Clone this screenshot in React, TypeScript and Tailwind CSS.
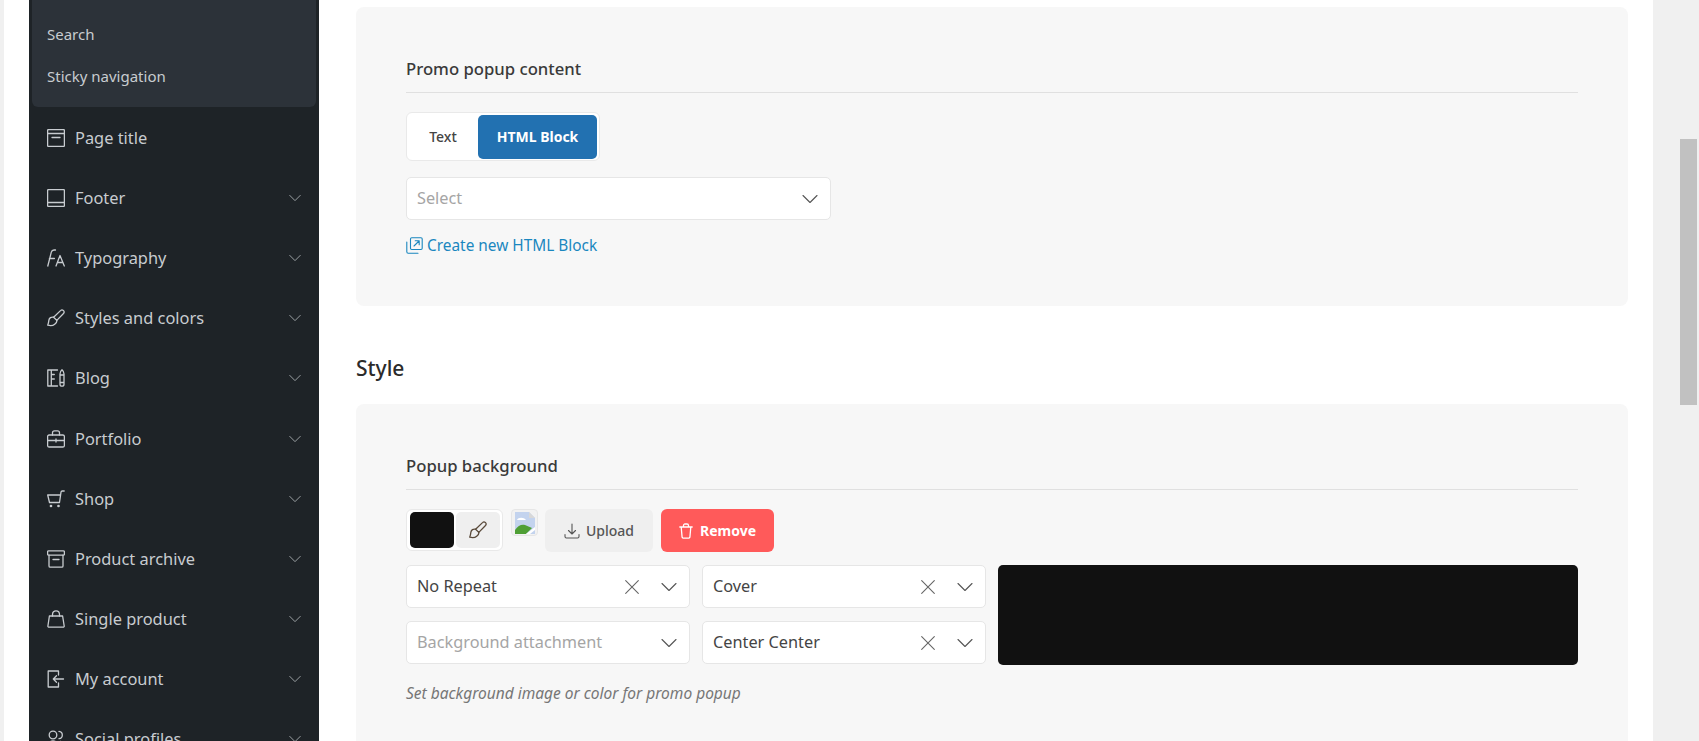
import React from 'react';

const stroke = { fill: 'none', stroke: 'currentColor', strokeWidth: 1.3, strokeLinecap: 'round' as const, strokeLinejoin: 'round' as const };

const Icon = ({ children, className = 'w-[18px] h-[18px]' }: { children: React.ReactNode; className?: string }) => (
  <svg viewBox="0 0 18 18" className={className} {...stroke}>{children}</svg>
);

const icons: Record<string, React.ReactNode> = {
  page: <><rect x="0.6" y="0.6" width="16.8" height="16.8" rx="1" /><path d="M0.6 4.5h16.8M5 8.5h8" /></>,
  footer: <><rect x="0.6" y="0.6" width="16.8" height="16.8" rx="1" /><path d="M0.6 13.5h16.8" /></>,
  type: <><path d="M0.8 17 4.300 3.200C4.700 1.600 5.600 1 7 1h1.500M2.400 9.500h5" /><path d="M9 17 13 6.500 17.300 17M10.300 13.500h5.700" /></>,
  brush: <><path d="M16.300 1.400c-.9-.8-2-.6-2.800.2L6.600 8.200l3.200 3.200 6.700-6.900c.8-.9.7-2.200-.2-3.100z" /><path d="M6.600 8.200C4.200 7.600 2.200 9 1.900 11.200c-.2 1.700-.5 3.400-1.200 5 2.200.6 5.200.6 7-1 1.600-1.300 2.400-2.400 2.100-3.800" /></>,
  blog: <><path d="M.8 1h3.500v16H.8zM4.300 1h6.200M4.300 17h6.200M4.300 5.500h3M4.300 10h3" /><path d="M13 5c0-1.500 1-3.500 2-4.300 1 .8 2 2.800 2 4.300v10.200c0 1.200-.9 2-2 2s-2-.8-2-2zM13 6h4M13 13.500h4" /></>,
  case: <><rect x="0.6" y="5" width="16.800" height="12" rx="1.500" /><path d="M5.500 5V2.800C5.500 1.600 6.400.8 7.500.8h3c1.100 0 2 .8 2 2V5M.6 10.500h16.800M9 9v3" /></>,
  cart: <><path d="M.7 5h12.900l-1.100 7.500H2.500L.7 5zM13 9l1-6.800c.1-.7.500-1.200 1.200-1.200h2" /><circle cx="4" cy="16" r=".7" /><circle cx="11.500" cy="16" r=".7" /></>,
  archive: <><rect x="0.6" y="0.8" width="16.800" height="4.400" rx="1" /><path d="M2 5.200V16c0 .7.500 1.200 1.200 1.200h11.600c.7 0 1.200-.5 1.200-1.200V5.200M6 9.500h6" /></>,
  bag: <><path d="M2.400 6h13.200l1.600 10c.1.700-.4 1.200-1.100 1.200H2c-.7 0-1.200-.5-1.100-1.200L2.400 6z" /><path d="M5.500 6V4.400C5.500 2.300 7 .8 9 .8s3.500 1.500 3.500 3.600V6" /></>,
  login: <><path d="M11.500 5V1H1.200v16h10.300v-4" /><path d="M16.500 9H6.500M9.500 5.800 6.300 9l3.200 3.200" /></>,
  users: <><circle cx="6" cy="5" r="3.800" /><path d="M.8 17c.3-4 2.400-6 5.200-6s4.900 2 5.200 6M12 1.400c2 .2 3.300 1.700 3.300 3.600S14 8.500 12 8.700M13.500 11.300c2.300.7 3.500 2.800 3.700 5.700" /></>,
};

const Chevron = ({ className }: { className: string }) => (
  <svg viewBox="0 0 16 10" className={className} fill="none" stroke="currentColor" strokeWidth={1.1} strokeLinecap="round" strokeLinejoin="round">
    <path d="M1 1.500 8 8.500l7-7" />
  </svg>
);

const Cross = () => (
  <svg viewBox="0 0 14 14" className="w-[14px] h-[14px] text-[#666]" fill="none" stroke="currentColor" strokeWidth={1.1} strokeLinecap="round">
    <path d="M.7.7l12.600 12.600M13.300.7.7 13.300" />
  </svg>
);

const menu = [
  { label: 'Page title', icon: 'page', arrow: false },
  { label: 'Footer', icon: 'footer', arrow: true },
  { label: 'Typography', icon: 'type', arrow: true },
  { label: 'Styles and colors', icon: 'brush', arrow: true },
  { label: 'Blog', icon: 'blog', arrow: true },
  { label: 'Portfolio', icon: 'case', arrow: true },
  { label: 'Shop', icon: 'cart', arrow: true },
  { label: 'Product archive', icon: 'archive', arrow: true },
  { label: 'Single product', icon: 'bag', arrow: true },
  { label: 'My account', icon: 'login', arrow: true },
  { label: 'Social profiles', icon: 'users', arrow: true },
];

function Sidebar() {
  return (
    <aside className="w-[290px] h-full shrink-0 bg-[#1e2327] overflow-hidden px-[3px] text-[#c8ccd0]">
      <div className="h-[107px] bg-[#2c3239] rounded-b-[6px] pl-[15px] pt-[22px] text-[15px] leading-[24px]">
        <div className="h-[24px] mb-[18px]">Search</div>
        <div className="h-[24px]">Sticky navigation</div>
      </div>
      <div className="pt-[1px]">
        {menu.map((m) => (
          <div key={m.label} className="h-[60.1px] flex items-center pl-[15px] pr-[15px] text-[16.4px]">
            <span className="mr-[10px] shrink-0 flex"><Icon>{icons[m.icon]}</Icon></span>
            <span className="flex-1 leading-[24px]">{m.label}</span>
            {m.arrow && <Chevron className="w-[12px] h-[8px] text-[#b4b8bc]" />}
          </div>
        ))}
      </div>
    </aside>
  );
}

function SelectBox({ value, placeholder, clear, className }: { value?: string; placeholder?: string; clear?: boolean; className: string }) {
  return (
    <div className={`h-[43px] flex items-center bg-white border border-[#e6e6e6] rounded-[5px] pl-[10px] pr-[12px] text-[16.3px] ${className}`}>
      <span className={`flex-1 ${value ? 'text-[#444]' : 'text-[#a5a5a5]'}`}>{value || placeholder}</span>
      {clear && <span className="mr-[22px] flex"><Cross /></span>}
      <Chevron className="w-[16px] h-[10px] text-[#555]" />
    </div>
  );
}

function SectionTitle({ children }: { children: React.ReactNode }) {
  return (
    <div className="h-[41px] border-b border-[#e0e0e0] text-[16.7px] font-medium text-[#3a3a3a] leading-[26px] pt-[4px]">{children}</div>
  );
}

export default function App() {
  return (
    <div className="flex h-[741px] w-[1699px] overflow-hidden bg-white font-['Noto_Sans',sans-serif]">
      <div className="w-[4px] shrink-0 bg-[#f0f0f0]" />
      <div className="w-[25px] shrink-0" />
      <Sidebar />
      <main className="w-[1334px] shrink-0 pl-[37px] pt-[7px] overflow-hidden">
        <section className="w-[1272px] h-[299px] bg-[#f7f7f7] rounded-[8px] pl-[50px] pr-[50px] pt-[45px]">
          <SectionTitle>Promo popup content</SectionTitle>
          <div className="mt-[19px] w-[194px] h-[49px] flex items-center bg-white border border-[#e9e9e9] rounded-[6px] pl-[1px] pr-[2px] text-[14px] font-medium">
            <div className="w-[70px] text-center text-[#444]">Text</div>
            <div className="w-[119px] h-[44px] flex items-center justify-center rounded-[5px] bg-[#2271b1] text-white font-bold">HTML Block</div>
          </div>
          <SelectBox placeholder="Select" className="mt-[16px] w-[425px]" />
          <div className="mt-[14px] flex items-center text-[#1a87bf] text-[15.4px]">
            <svg viewBox="0 0 17 17" className="w-[17px] h-[17px] mr-[4px]" fill="none" stroke="currentColor" strokeWidth={1.1} strokeLinecap="round" strokeLinejoin="round">
              <rect x="4.500" y="0.800" width="11.700" height="11.700" rx="1.200" />
              <path d="M.8 5v9.800c0 .8.600 1.400 1.400 1.400H12M8 9l5-5M9.200 3.800h4v4" />
            </svg>
            Create new HTML Block
          </div>
        </section>
        <h2 className="mt-[47px] mb-[21px] h-[30px] text-[21px] leading-[30px] font-medium text-[#2b2b2b]">Style</h2>
        <section className="w-[1272px] h-[400px] bg-[#f7f7f7] rounded-t-[8px] pl-[50px] pr-[50px] pt-[45px]">
          <SectionTitle>Popup background</SectionTitle>
          <div className="mt-[19px] flex items-start">
            <div className="w-[97px] h-[42px] flex items-center gap-[2px] bg-white border border-[#e9e9e9] rounded-[6px] pl-[3px]">
              <div className="w-[44px] h-[36px] rounded-[5px] bg-[#111111]" />
              <div className="w-[44px] h-[36px] rounded-[5px] bg-[#efefef] flex items-center justify-center text-[#5a4a3a]">
                <Icon className="w-[18px] h-[18px]">{icons.brush}</Icon>
              </div>
            </div>
            <div className="ml-[8px] w-[27px] h-[27px] flex items-center justify-center bg-[#f2f2f2] border border-[#e6e6e6] rounded-[4px]">
              <svg viewBox="0 0 20 22" className="w-[20px] h-[22px]">
                <path d="M0 0h14l6 6v16H0z" fill="#c3d3ee" />
                <path d="M14 0l6 6h-6z" fill="#d8d8d8" />
                <path d="M0 22v-4c3-5 7-6 10-5l7 3-6 6z" fill="#4f9f35" />
                <path d="M2 8c1-3 7-3 9 0z" fill="#fff" />
                <path d="M11 22l9-7v3l-5 4z" fill="#fff" />
              </svg>
            </div>
            <div className="ml-[7px] w-[108px] h-[43px] flex items-center justify-center gap-[6px] rounded-[6px] bg-[#efefef] text-[#555] text-[14px] font-medium">
              <svg viewBox="0 0 16 16" className="w-[16px] h-[16px]" fill="none" stroke="currentColor" strokeWidth={1.1} strokeLinecap="round" strokeLinejoin="round">
                <path d="M8 1v10M4.500 7.500 8 11l3.500-3.500M1 11.500v2c0 .8.600 1.500 1.400 1.500h11.200c.8 0 1.400-.7 1.400-1.500v-2" />
              </svg>
              Upload
            </div>
            <div className="ml-[8px] w-[113px] h-[43px] flex items-center justify-center gap-[7px] rounded-[6px] bg-[#ff5a5a] text-white text-[14px] font-bold">
              <svg viewBox="0 0 14 16" className="w-[14px] h-[16px]" fill="none" stroke="currentColor" strokeWidth={1.3} strokeLinecap="round" strokeLinejoin="round">
                <path d="M.8 4h12.400M2.200 4l.9 10.200c.1.600.5.900 1 .9h5.800c.5 0 .9-.3 1-.9L11.800 4M4.500 4V2.500C4.500 1.500 5.200 1 6 1h2c.8 0 1.500.5 1.500 1.500V4" />
              </svg>
              Remove
            </div>
          </div>
          <div className="mt-[13px] flex gap-[12px]">
            <div className="flex flex-col gap-[13px]">
              <div className="flex gap-[12px]">
                <SelectBox value="No Repeat" clear className="w-[284px]" />
                <SelectBox value="Cover" clear className="w-[284px]" />
              </div>
              <div className="flex gap-[12px]">
                <SelectBox placeholder="Background attachment" className="w-[284px]" />
                <SelectBox value="Center Center" clear className="w-[284px]" />
              </div>
            </div>
            <div className="w-[580px] h-[100px] rounded-[5px] bg-[#111111]" />
          </div>
          <p className="mt-[17px] italic text-[15.5px] text-[#767676]">Set background image or color for promo popup</p>
        </section>
      </main>
      <div className="flex-1 bg-[#f0f0f0] pl-[27px] pt-[139px]">
        <div className="w-[17px] h-[266px] bg-[#c1c1c1]" />
      </div>
    </div>
  );
}
